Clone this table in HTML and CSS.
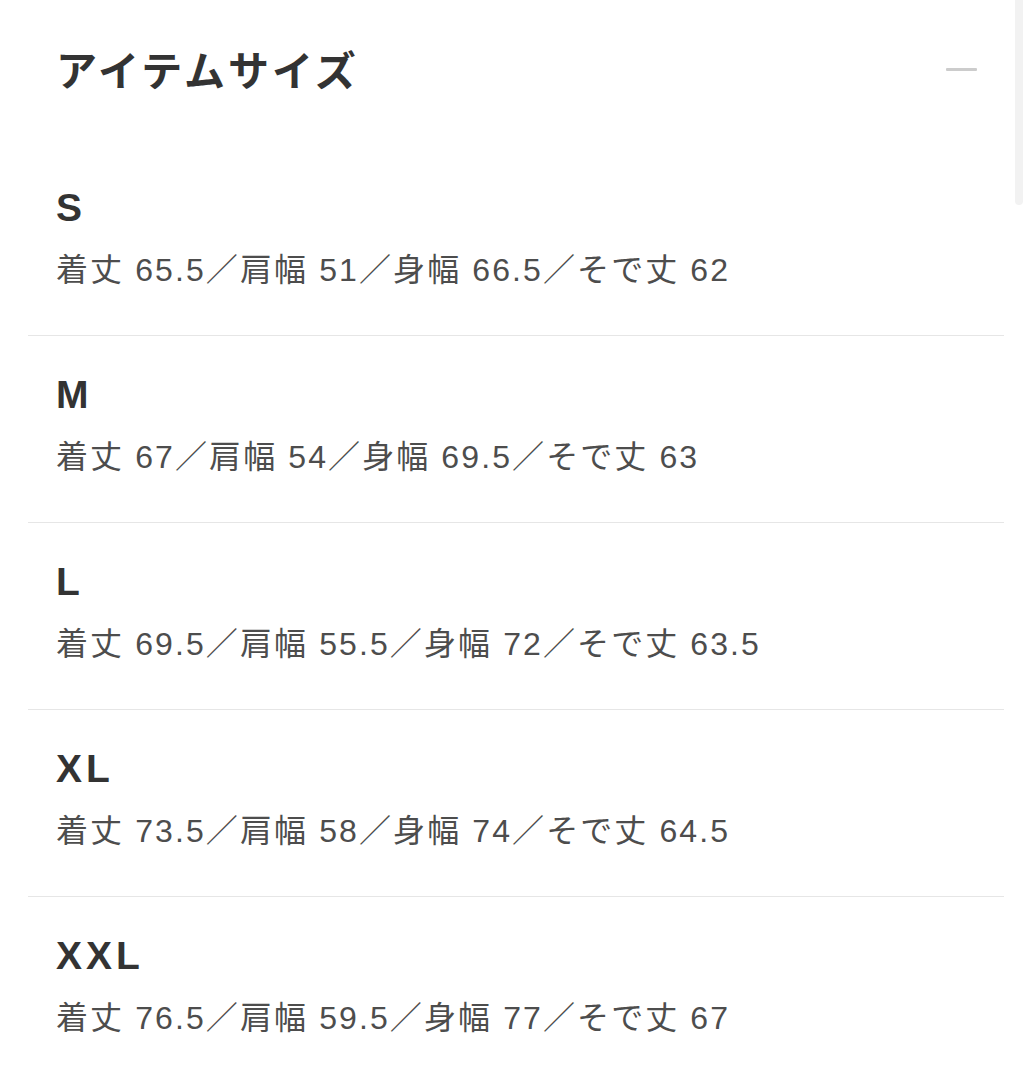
FILE: index.html
```html
<!DOCTYPE html>
<html lang="ja">
<head>
<meta charset="utf-8">
<title>アイテムサイズ</title>
<link rel="stylesheet" href="styles.css">
</head>
<body>
<div class="page">
  <div class="scrollbar"></div>
  <header class="head">
    <h2 class="title">アイテムサイズ</h2>
    <span class="minus" aria-label="閉じる"></span>
  </header>
  <ul class="sizes">
    <li class="row"><div class="label">S</div><div class="detail">着丈 65.5／肩幅 51／身幅 66.5／そで丈 62</div></li>
    <li class="row"><div class="label">M</div><div class="detail">着丈 67／肩幅 54／身幅 69.5／そで丈 63</div></li>
    <li class="row"><div class="label">L</div><div class="detail">着丈 69.5／肩幅 55.5／身幅 72／そで丈 63.5</div></li>
    <li class="row"><div class="label">XL</div><div class="detail">着丈 73.5／肩幅 58／身幅 74／そで丈 64.5</div></li>
    <li class="row"><div class="label">XXL</div><div class="detail">着丈 76.5／肩幅 59.5／身幅 77／そで丈 67</div></li>
  </ul>
</div>
</body>
</html>
```

FILE: styles.css
```css
html, body {
  margin: 0;
  padding: 0;
  background: #ffffff;
}
body {
  font-family: "Liberation Sans", "Noto Sans CJK JP", sans-serif;
  color: #333333;
}
.page {
  position: relative;
  width: 1032px;
  height: 1080px;
  overflow: hidden;
}
.scrollbar {
  position: absolute;
  top: 0;
  left: 1015px;
  width: 8px;
  height: 205px;
  background: #f2f2f2;
  border-radius: 0 0 4px 4px;
}
.head {
  display: flex;
  align-items: center;
  justify-content: space-between;
  padding: 40px 55px 0 56px;
  height: 56px;
  margin-bottom: 55px;
}
.title {
  margin: 0;
  font-family: "Noto Sans CJK JP", sans-serif;
  font-size: 41px;
  line-height: 56px;
  font-weight: 700;
  letter-spacing: 3px;
  color: #333333;
}
.minus {
  display: block;
  width: 31px;
  height: 3px;
  margin-top: 2px;
  background: #cccccc;
  border-radius: 1px;
}
.sizes {
  list-style: none;
  margin: 0 28px;
  padding: 0;
}
.row {
  padding: 37px 0 45px 28px;
  border-top: 1px solid #e6e6e6;
}
.row:first-child {
  border-top: none;
  padding-top: 35px;
}
.label {
  font-size: 39px;
  line-height: 44px;
  font-weight: 700;
  letter-spacing: 4px;
  color: #333333;
  margin-bottom: 20px;
}
.detail {
  font-size: 32px;
  line-height: 40px;
  letter-spacing: 2.1px;
  color: #4d4d4d;
}
```
